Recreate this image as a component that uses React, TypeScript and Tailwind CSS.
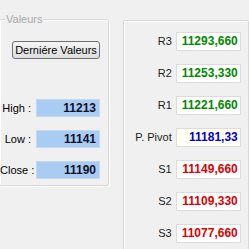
const pivots = [
  { label: "R3", value: "11293,660", color: "text-[#008a00]", bg: "bg-white" },
  { label: "R2", value: "11253,330", color: "text-[#008a00]", bg: "bg-white" },
  { label: "R1", value: "11221,660", color: "text-[#008a00]", bg: "bg-white" },
  { label: "P. Pivot", value: "11181,33", color: "text-[#0000d0]", bg: "bg-[#fffff4]" },
  { label: "S1", value: "11149,660", color: "text-[#e00000]", bg: "bg-white" },
  { label: "S2", value: "11109,330", color: "text-[#e00000]", bg: "bg-white" },
  { label: "S3", value: "11077,660", color: "text-[#e00000]", bg: "bg-white" },
];

const values = [
  { label: "High :", value: "11213" },
  { label: "Low :", value: "11141" },
  { label: "Close :", value: "11190" },
];

export default function App() {
  return (
    <div className="w-[249px] h-[249px] overflow-hidden bg-[#f0f0f0] font-['Liberation_Sans',sans-serif] text-[11px] text-black">
      <div className="flex pt-[19px]">
        {/* Valeurs group */}
        <div className="relative ml-[-1px] w-[113px] h-[167px] border border-[#d8d8d8] rounded-[2px] shadow-[inset_1px_1px_0_#ffffff,1px_1px_0_#ffffff]">
          <span className="absolute left-[5px] top-[-8px] px-[1px] bg-[#f0f0f0] text-[#a8a8a8] leading-[14px]">
            Valeurs
          </span>
          <button className="ml-[12px] mt-[21px] w-[88px] h-[18px] rounded-[3px] border border-[#707070] bg-gradient-to-b from-[#f6f6f6] to-[#dddddd] text-[11px] leading-[16px] text-black">
            Derniére Valeurs
          </button>
          <div className="mt-[40px] flex flex-col gap-[13px]">
            {values.map((v) => (
              <div key={v.label} className="flex items-center h-[18px]">
                <span className="w-[33px] text-right pr-[2px] whitespace-nowrap">{v.label}</span>
                <div className="ml-[3px] w-[64px] h-[18px] bg-[#a8ccf2] border border-[#c4d8ee] pr-[3px] text-right font-bold text-[12px] leading-[16px] text-[#101028]">
                  {v.value}
                </div>
              </div>
            ))}
          </div>
        </div>

        {/* Pivot panel */}
        <div className="ml-[14px] mt-[1px] w-[130px] h-[240px] border border-[#d8d8d8] rounded-[2px] shadow-[inset_1px_1px_0_#ffffff]">
          <div className="mt-[11px] flex flex-col gap-[13px]">
            {pivots.map((p) => (
              <div key={p.label} className="flex items-center h-[19px]">
                <span className="w-[48px] text-right whitespace-nowrap text-[11px] text-[#202020]">{p.label}</span>
                <div
                  className={`ml-[4px] w-[65px] h-[19px] border border-[#dcdcdc] ${p.bg} ${p.color} pr-[2px] text-right font-bold text-[12px] leading-[17px]`}
                >
                  {p.value}
                </div>
              </div>
            ))}
          </div>
        </div>
      </div>
    </div>
  );
}
